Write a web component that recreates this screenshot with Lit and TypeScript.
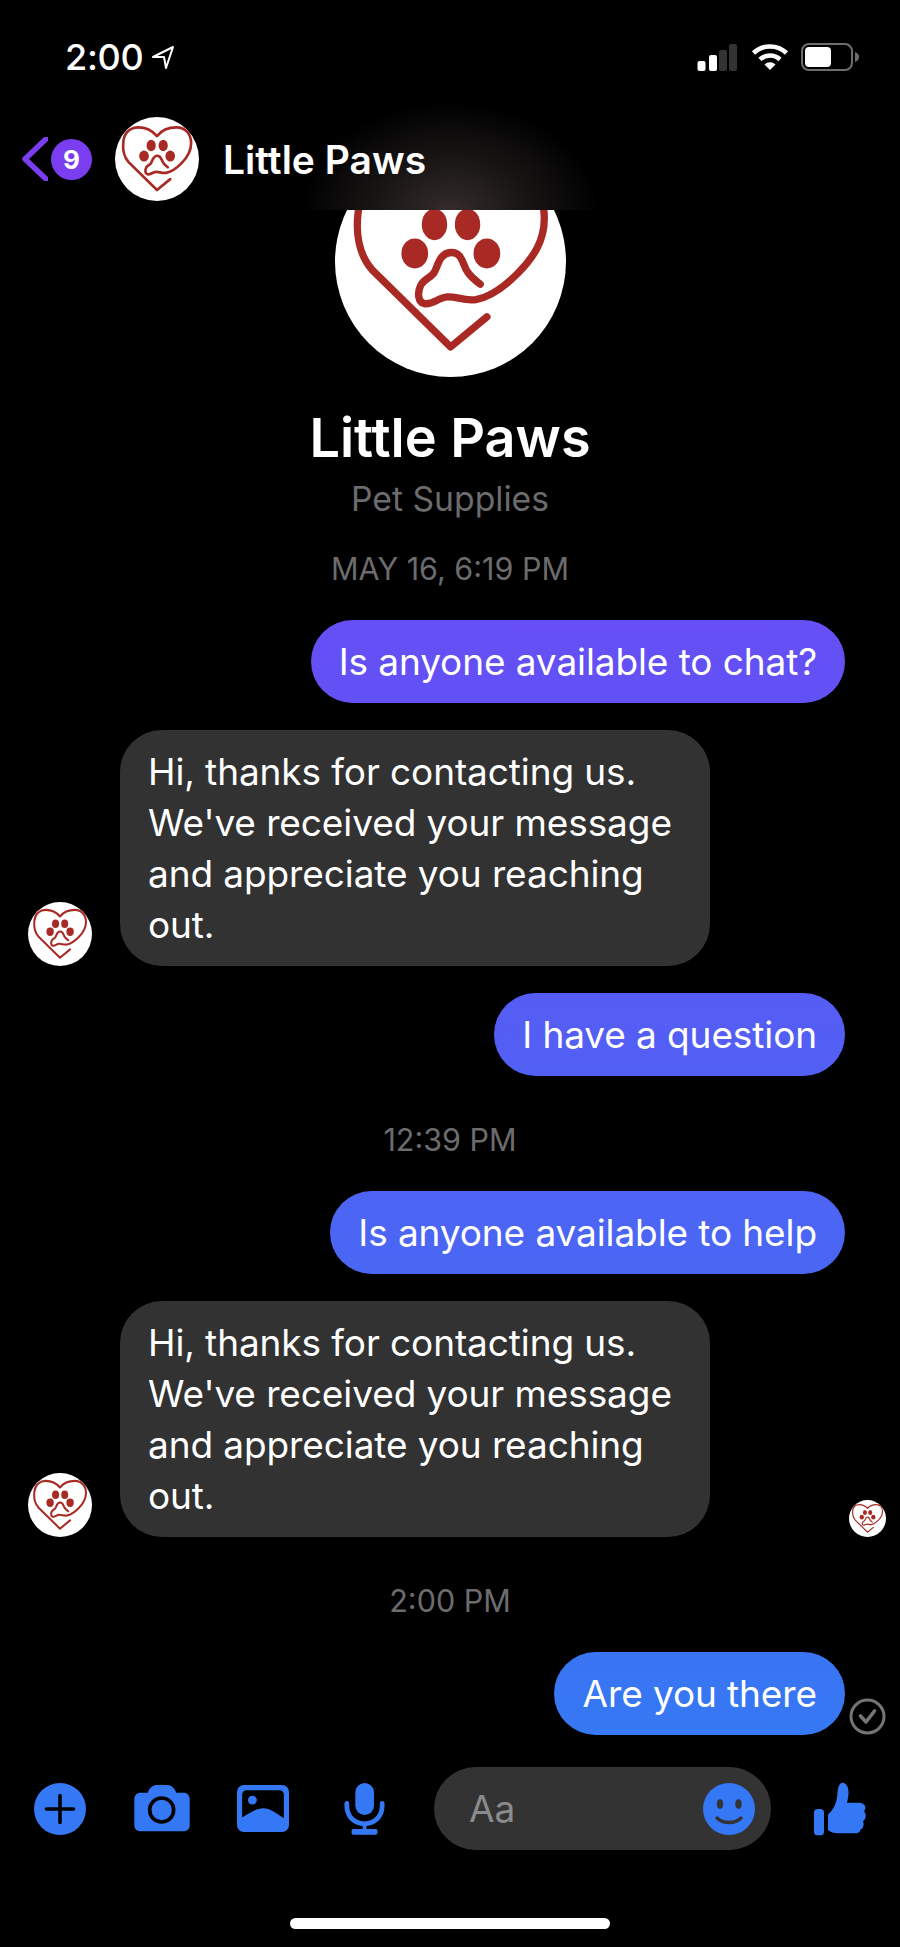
import { LitElement, html, svg, css } from 'lit';
import { customElement } from 'lit/decorators.js';

const pawLogo = svg`
  <circle cx="449" cy="214" r="346" fill="#fff"/>
  <path d="M558 380 L449 470 L215 240 C175 195 165 130 172 70 C180 -10 235 -47 295 -47 C360 -47 415 -15 449 25 C480 -15 540 -47 610 -47 C680 -47 730 5 730 85 C730 150 700 200 650 250 C610 290 570 320 525 328 C490 333 465 318 440 320 C410 323 395 345 370 340 C350 335 350 305 360 285 C368 268 385 265 398 250 C412 232 412 190 450 187 C485 185 485 225 500 245 C510 260 525 272 538 282"
    fill="none" stroke="#a92a24" stroke-width="22" stroke-linecap="round" stroke-linejoin="round"/>
  <ellipse cx="401" cy="103" rx="38" ry="47" fill="#a92a24"/>
  <ellipse cx="500" cy="103" rx="38" ry="47" fill="#a92a24"/>
  <ellipse cx="342" cy="190" rx="40" ry="45" fill="#a92a24"/>
  <ellipse cx="558" cy="190" rx="40" ry="45" fill="#a92a24"/>
`;

const logo = (cls: string) => html`<svg class=${cls} viewBox="103 -132 692 692">${pawLogo}</svg>`;

@customElement('app-root')
export class AppRoot extends LitElement {
  static styles = css`
    :host {
      display: block;
      width: 900px;
      height: 1947px;
      background: #000;
      color: #fff;
      font-family: Inter, 'Noto Sans', sans-serif;
      overflow: hidden;
    }
    svg { display: block; flex: none; }

    .top {
      height: 210px;
      box-sizing: border-box;
      padding-top: 43px;
      background: radial-gradient(ellipse 150px 110px at 450px 212px, #352c2c 0%, #191515 50%, #000 100%);
    }
    .status {
      height: 28px;
      display: flex;
      align-items: center;
      padding-left: 65px;
    }
    .clock {
      font-size: 36px;
      font-weight: 500;
      letter-spacing: -0.3px;
      line-height: 28px;
      width: 86px;
    }
    .arrow { width: 24px; height: 24px; }
    .signal { width: 40px; height: 27px; margin-left: 522px; }
    .wifi { width: 38px; height: 28px; margin-left: 14px; }
    .battery { width: 58px; height: 28px; margin-left: 12px; }

    .nav {
      display: flex;
      align-items: center;
      height: 84px;
      margin-top: 46px;
      padding-left: 22px;
    }
    .chevron { width: 26px; height: 44px; }
    .badge {
      width: 41px;
      height: 41px;
      border-radius: 50%;
      background: #7a3df0;
      margin-left: 3px;
      display: flex;
      align-items: center;
      justify-content: center;
      font-size: 26px;
      font-weight: 700;
    }
    .nav-avatar { width: 84px; height: 84px; margin-left: 23px; }
    .nav-name {
      margin-left: 24px;
      font-size: 39px;
      font-weight: 600;
    }

    .thread {
      height: 1737px;
      overflow: hidden;
      display: flex;
      flex-direction: column;
    }
    .profile {
      display: flex;
      flex-direction: column;
      align-items: center;
      margin-top: -64px;
    }
    .big-avatar { width: 231px; height: 231px; }
    .profile-name {
      margin-top: 31px;
      font-size: 54px;
      line-height: 60px;
      font-weight: 600;
    }
    .profile-kind {
      margin-top: 11px;
      font-size: 33.7px;
      line-height: 40px;
      color: #6c6c6e;
    }

    .stamp {
      text-align: center;
      font-size: 30.5px;
      line-height: 36px;
      color: #6c6c6e;
      margin-top: 46px;
    }
    .stamp.first { margin-top: 32px; }

    .row { display: flex; align-items: flex-end; margin-top: 27px; }
    .row.first { margin-top: 33px; }
    .row.out { justify-content: flex-end; padding-right: 55px; }
    .row.out.seen { padding-right: 14px; gap: 4px; }
    .row.in { padding: 0 14px 0 28px; }

    .bubble {
      font-size: 37px;
      line-height: 51px;
      letter-spacing: -0.1px;
      padding: 16px 28px;
      border-radius: 42px;
      white-space: nowrap;
    }
    .out .bubble {
      background: linear-gradient(to bottom, #664ef5 600px, #3678f3 1740px) fixed;
    }
    .in .bubble {
      background: #323232;
      margin-left: 28px;
      width: 590px;
      box-sizing: border-box;
    }
    .small-avatar { width: 64px; height: 64px; }
    .seen-avatar { width: 37px; height: 37px; margin-left: auto; }
    .check { width: 37px; height: 37px; }

    .composer {
      display: flex;
      align-items: center;
      height: 83px;
      margin-top: 32px;
      padding-left: 34px;
    }
    .plus { width: 52px; height: 52px; }
    .camera { width: 56px; height: 47px; margin-left: 48px; }
    .gallery { width: 52px; height: 47px; margin-left: 47px; }
    .mic { width: 41px; height: 52px; margin-left: 55px; }
    .field {
      width: 337px;
      height: 83px;
      margin-left: 49px;
      border-radius: 42px;
      background: #333;
      display: flex;
      align-items: center;
      justify-content: space-between;
      padding: 0 16px 0 35px;
      box-sizing: border-box;
      font-size: 37px;
      color: #8b8b8d;
    }
    .smile { width: 52px; height: 52px; }
    .thumb { width: 52px; height: 54px; margin-left: 43px; }

    .home {
      width: 320px;
      height: 11px;
      border-radius: 6px;
      background: #fff;
      margin: 68px auto 0;
    }
  `;

  render() {
    return html`
      <div class="top">
        <div class="status">
          <span class="clock">2:00</span>
          <svg class="arrow" viewBox="0 0 24 24">
            <path d="M2 12 L22 2 L15 23 L13 12 Z" fill="none" stroke="#fff" stroke-width="2" stroke-linejoin="round"/>
          </svg>
          <svg class="signal" viewBox="0 0 40 27">
            <rect x="0.5" y="17" width="8" height="10" rx="2" fill="#fff"/>
            <rect x="12" y="11" width="8" height="16" rx="2" fill="#fff"/>
            <rect x="22" y="6" width="8" height="21" rx="2" fill="#333"/>
            <rect x="32" y="0" width="8" height="27" rx="2" fill="#333"/>
          </svg>
          <svg class="wifi" viewBox="0 0 38 28" fill="none" stroke="#fff" stroke-width="4.6">
            <path d="M2.5 10 A24 24 0 0 1 35.5 10"/>
            <path d="M9 16.5 A14.5 14.5 0 0 1 29 16.5"/>
            <path d="M19 27 L13.5 21.5 A8 8 0 0 1 24.5 21.5 Z" fill="#fff" stroke="none"/>
          </svg>
          <svg class="battery" viewBox="0 0 58 28">
            <rect x="1" y="1" width="50" height="26" rx="7" fill="none" stroke="#6e6e6e" stroke-width="2"/>
            <rect x="4" y="4" width="26" height="20" rx="4" fill="#fff"/>
            <path d="M54 9 C57 10 58 12 58 14 C58 16 57 18 54 19 Z" fill="#6e6e6e"/>
          </svg>
        </div>
        <div class="nav">
          <svg class="chevron" viewBox="0 0 26 44">
            <path d="M24 2 L3 22 L24 42" fill="none" stroke="#7a3df0" stroke-width="5.5" stroke-linejoin="round" stroke-linecap="round"/>
          </svg>
          <span class="badge">9</span>
          ${logo('nav-avatar')}
          <span class="nav-name">Little Paws</span>
        </div>
      </div>

      <div class="thread">
        <div class="profile">
          ${logo('big-avatar')}
          <div class="profile-name">Little Paws</div>
          <div class="profile-kind">Pet Supplies</div>
        </div>

        <div class="stamp first">MAY 16, 6:19 PM</div>
        <div class="row out first"><div class="bubble">Is anyone available to chat?</div></div>
        <div class="row in">
          ${logo('small-avatar')}
          <div class="bubble">Hi, thanks for contacting us.<br>We've received your message<br>and appreciate you reaching<br>out.</div>
        </div>
        <div class="row out"><div class="bubble">I have a question</div></div>

        <div class="stamp">12:39 PM</div>
        <div class="row out first"><div class="bubble">Is anyone available to help</div></div>
        <div class="row in">
          ${logo('small-avatar')}
          <div class="bubble">Hi, thanks for contacting us.<br>We've received your message<br>and appreciate you reaching<br>out.</div>
          ${logo('seen-avatar')}
        </div>

        <div class="stamp">2:00 PM</div>
        <div class="row out first seen">
          <div class="bubble">Are you there</div>
          <svg class="check" viewBox="0 0 37 37" fill="none" stroke="#757575">
            <circle cx="18.5" cy="18.5" r="16.5" stroke-width="3"/>
            <path d="M11.5 18 L17 24 L25.5 13" stroke-width="3.6" stroke-linecap="round" stroke-linejoin="round"/>
          </svg>
        </div>

        <div class="composer">
          <svg class="plus" viewBox="0 0 52 52">
            <circle cx="26" cy="26" r="26" fill="#3478f6"/>
            <path d="M12.5 26 H39.5 M26 12.5 V39.5" stroke="#000" stroke-width="3.6" stroke-linecap="round"/>
          </svg>
          <svg class="camera" viewBox="402 197 166 141">
            <path d="M420 220 H442 C448 205 458 197 470 197 H500 C512 197 522 205 528 220 H550 C560 220 568 228 568 238 V320 C568 328 560 336 550 336 H420 C410 336 402 328 402 320 V238 C402 228 410 220 420 220 Z" fill="#3478f6"/>
            <circle cx="484" cy="272" r="36" fill="#3478f6" stroke="#000" stroke-width="11"/>
          </svg>
          <svg class="gallery" viewBox="713 197 152 137">
            <rect x="713" y="197" width="152" height="137" rx="20" fill="#3478f6"/>
            <path d="M742 212 H836 C845 212 850 217 850 226 V294 C825 278 810 265 790 265 C770 265 755 276 728 292 V226 C728 217 733 212 742 212 Z" fill="#000"/>
            <circle cx="758" cy="241" r="13" fill="#3478f6"/>
          </svg>
          <svg class="mic" viewBox="1034 190 120 153">
            <rect x="1067" y="190" width="55" height="94" rx="27.5" fill="#3478f6"/>
            <path d="M1042 250 V258 C1042 290 1066 310 1094 310 C1122 310 1146 290 1146 258 V250" fill="none" stroke="#3478f6" stroke-width="14" stroke-linecap="round"/>
            <path d="M1094 310 V332" stroke="#3478f6" stroke-width="11"/>
            <rect x="1056" y="325" width="76" height="17" rx="5" fill="#3478f6"/>
          </svg>
          <div class="field">
            <span>Aa</span>
            <svg class="smile" viewBox="0 0 52 52">
              <circle cx="26" cy="26" r="26" fill="#3478f6"/>
              <ellipse cx="17" cy="21" rx="3.2" ry="4.8" fill="#333"/>
              <ellipse cx="35.5" cy="21" rx="3.2" ry="4.8" fill="#333"/>
              <path d="M14 35 C20 41 32 41 38 35" fill="none" stroke="#333" stroke-width="3.4" stroke-linecap="round"/>
            </svg>
          </div>
          <svg class="thumb" viewBox="1093 422 156 162">
            <rect x="1093" y="503" width="30" height="79" rx="11" fill="#3478f6"/>
            <path d="M1135 520 C1150 505 1160 490 1163 460 C1165 435 1170 422 1182 425 C1198 430 1200 455 1192 484 L1230 484 C1250 488 1250 500 1243 510 C1252 520 1248 535 1240 540 C1245 550 1240 562 1232 565 C1232 572 1225 576 1215 576 L1170 576 C1150 576 1140 570 1135 565 Z" fill="#3478f6"/>
          </svg>
        </div>

        <div class="home"></div>
      </div>
    `;
  }
}
